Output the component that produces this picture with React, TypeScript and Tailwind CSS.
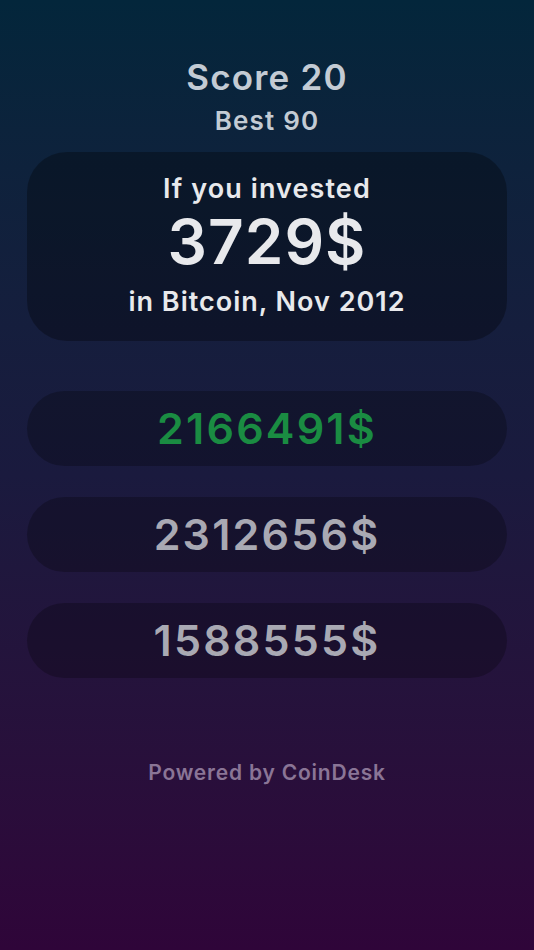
export default function App() {
  const font = { fontFamily: '"Inter", "Liberation Sans", sans-serif' };
  return (
    <div
      className="w-[534px] h-[950px] bg-gradient-to-b from-[#03263b] via-[#1a1a3e] to-[#2f0539] flex flex-col items-center"
      style={font}
    >
      <div className="mt-[54px] text-[35px] leading-[46px] font-semibold tracking-[1.2px] text-[#c3cbd4]">Score 20</div>
      <div className="text-[26px] leading-[36px] font-semibold tracking-[1.2px] text-[#c3cbd4] mt-[3px]">Best 90</div>
      <div className="mt-[13px] w-[480px] h-[189px] rounded-[40px] bg-black/30 flex flex-col items-center pt-[19px]">
        <div className="text-[27px] leading-[36px] font-semibold tracking-[1.1px] text-[#e8e9ec]">If you invested</div>
        <div className="text-[62px] leading-[72px] font-semibold tracking-[1px] text-[#e8e9ec] -mt-[1px]">3729$</div>
        <div className="text-[27px] leading-[36px] font-semibold tracking-[1px] text-[#e8e9ec] mt-[6px]">in Bitcoin, Nov 2012</div>
      </div>
      <div className="mt-[50px] flex flex-col gap-[31px]">
        {[
          { v: "2166491$", c: "text-[#1a8c42]" },
          { v: "2312656$", c: "text-[#a9a9b3]" },
          { v: "1588555$", c: "text-[#a9a9b3]" },
        ].map((b) => (
          <div
            key={b.v}
            className={`w-[480px] h-[75px] rounded-full bg-black/25 flex items-center justify-center text-[43px] font-semibold tracking-[2.2px] ${b.c}`}
          >
            {b.v}
          </div>
        ))}
      </div>
      <div className="mt-[81px] text-[21px] leading-[28px] font-semibold tracking-[0.8px] text-[#8a7596]">Powered by CoinDesk</div>
    </div>
  );
}
